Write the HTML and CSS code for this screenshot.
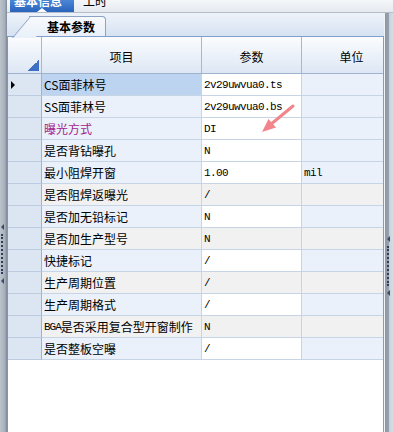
FILE: index.html
```html
<!DOCTYPE html>
<html lang="zh-CN">
<head>
    <meta charset="UTF-8">
    <title>基本参数</title>
    <link rel="stylesheet" href="styles.css">
</head>
<body>
    <div class="window">
        <div class="splitter splitter-left">
            <span class="grip-arrow"></span>
            <span class="grip-dots"></span>
            <span class="grip-arrow"></span>
        </div>

        <div class="center">
            <div class="topbar">
                <div class="top-tab active">
                    <span class="top-tab-text">基本信息</span>
                    <span class="top-tab-mark"></span>
                </div>
                <div class="top-tab">
                    <span class="top-tab-text">工时</span>
                </div>
            </div>

            <div class="workspace">
                <div class="panel">
                    <div class="tabstrip">
                        <div class="tab"><span>基本参数</span></div>
                    </div>

                    <div class="grid-view">
                        <div class="grid-row header">
                            <div class="cell corner"></div>
                            <div class="cell">项目</div>
                            <div class="cell">参数</div>
                            <div class="cell">单位</div>
                        </div>

                        <div class="grid-row odd selected">
                            <div class="cell row-head"><span class="row-pointer"></span></div>
                            <div class="cell item">CS面菲林号</div>
                            <div class="cell value">2v29uwvua0.ts</div>
                            <div class="cell unit"></div>
                        </div>
                        <div class="grid-row odd">
                            <div class="cell row-head"></div>
                            <div class="cell item">SS面菲林号</div>
                            <div class="cell value">2v29uwvua0.bs</div>
                            <div class="cell unit"></div>
                        </div>
                        <div class="grid-row odd">
                            <div class="cell row-head"></div>
                            <div class="cell item highlight">曝光方式</div>
                            <div class="cell value">DI</div>
                            <div class="cell unit"></div>
                        </div>
                        <div class="grid-row odd">
                            <div class="cell row-head"></div>
                            <div class="cell item">是否背钻曝孔</div>
                            <div class="cell value">N</div>
                            <div class="cell unit"></div>
                        </div>
                        <div class="grid-row odd">
                            <div class="cell row-head"></div>
                            <div class="cell item">最小阻焊开窗</div>
                            <div class="cell value">1.00</div>
                            <div class="cell unit">mil</div>
                        </div>
                        <div class="grid-row even">
                            <div class="cell row-head"></div>
                            <div class="cell item">是否阻焊返曝光</div>
                            <div class="cell value">/</div>
                            <div class="cell unit"></div>
                        </div>
                        <div class="grid-row odd">
                            <div class="cell row-head"></div>
                            <div class="cell item">是否加无铅标记</div>
                            <div class="cell value">N</div>
                            <div class="cell unit"></div>
                        </div>
                        <div class="grid-row even">
                            <div class="cell row-head"></div>
                            <div class="cell item">是否加生产型号</div>
                            <div class="cell value">N</div>
                            <div class="cell unit"></div>
                        </div>
                        <div class="grid-row odd">
                            <div class="cell row-head"></div>
                            <div class="cell item">快捷标记</div>
                            <div class="cell value">/</div>
                            <div class="cell unit"></div>
                        </div>
                        <div class="grid-row even">
                            <div class="cell row-head"></div>
                            <div class="cell item">生产周期位置</div>
                            <div class="cell value">/</div>
                            <div class="cell unit"></div>
                        </div>
                        <div class="grid-row odd">
                            <div class="cell row-head"></div>
                            <div class="cell item">生产周期格式</div>
                            <div class="cell value">/</div>
                            <div class="cell unit"></div>
                        </div>
                        <div class="grid-row even">
                            <div class="cell row-head"></div>
                            <div class="cell item"><span class="latin">BGA</span>是否采用复合型开窗制作</div>
                            <div class="cell value">N</div>
                            <div class="cell unit"></div>
                        </div>
                        <div class="grid-row odd">
                            <div class="cell row-head"></div>
                            <div class="cell item">是否整板空曝</div>
                            <div class="cell value">/</div>
                            <div class="cell unit"></div>
                        </div>
                    </div>
                </div>

                <div class="splitter splitter-right">
                    <span class="grip-arrow"></span>
                    <span class="grip-dots"></span>
                    <span class="grip-arrow"></span>
                </div>
            </div>
        </div>

        <!-- red annotation arrow drawn over the grid -->
        <svg class="pointer" width="393" height="432" viewBox="0 0 393 432">
            <line x1="293" y1="106" x2="270" y2="125" stroke="#f2858c" stroke-width="3" stroke-linecap="round"/>
            <polygon points="262,132 268.5,119 276,127.5" fill="#f2858c"/>
        </svg>
    </div>
</body>
</html>
```

FILE: styles.css
```css
* {
    box-sizing: border-box;
}

body {
    margin: 0;
    font-family: "Noto Sans CJK SC", "Liberation Sans", sans-serif;
    font-size: 12px;
    color: #000;
    background: #fff;
}

.window {
    position: relative;
    width: 393px;
    height: 432px;
    display: flex;
    overflow: hidden;
}

.splitter {
    display: flex;
    flex-direction: column;
    align-items: flex-start;
}

.splitter-left {
    width: 7px;
    padding: 224px 0 0 1px;
    background: linear-gradient(to right, #bcc3cc, #a6afba 70%, #7d8898);
}

.splitter-right {
    width: 9px;
    padding: 223px 0 0 2px;
    border-left: 1px solid #eef1f5;
    background: linear-gradient(to right, #8d97a5 0, #98a2af 4px, #c9d0d8 4px, #d8dde3);
}

.grip-arrow {
    width: 0;
    height: 0;
    border-top: 3px solid transparent;
    border-bottom: 3px solid transparent;
    border-right: 3px solid #3c4a66;
}

.grip-dots {
    width: 2px;
    height: 40px;
    margin: 4px 0;
    border-left: 2px dotted #2f3d5c;
}

.center {
    flex: 1;
    display: flex;
    flex-direction: column;
}

.topbar {
    height: 13px;
    display: flex;
    align-items: stretch;
    gap: 9px;
    padding-left: 3px;
    background: linear-gradient(#f4f6f9, #e6eaef);
    border-bottom: 1px solid #b3bdca;
    overflow: hidden;
}

.top-tab {
    display: flex;
    flex-direction: column;
    align-items: center;
    height: 12px;
}

.top-tab.active {
    width: 64px;
    background: linear-gradient(#4b86d6, #2a63bb);
}

.top-tab-text {
    line-height: 12px;
    margin-top: -5px;
    font-size: 12px;
}

.top-tab.active .top-tab-text {
    color: #fff;
    font-weight: bold;
    margin-right: 8px;
}

.top-tab-mark {
    margin-top: auto;
    width: 0;
    height: 0;
    border-left: 5px solid transparent;
    border-right: 5px solid transparent;
    border-bottom: 4px solid #fff;
}

.workspace {
    flex: 1;
    display: flex;
}

.panel {
    width: 377px;
    display: flex;
    flex-direction: column;
}

.tabstrip {
    height: 24px;
    display: flex;
    align-items: flex-end;
    padding-left: 22px;
    background: linear-gradient(#eef3fa, #d6e2f2);
    border-bottom: 1px solid #7f9fcf;
}

.tab {
    position: relative;
    width: 77px;
    height: 20px;
    display: flex;
    align-items: center;
    justify-content: center;
    padding-left: 8px;
    font-weight: bold;
    background: linear-gradient(#f7f9fd, #e9f0f9);
    border-top: 1px solid #8ca3c6;
    border-right: 1px solid #8ca3c6;
    border-radius: 0 4px 0 0;
}

.tab::before {
    content: "";
    position: absolute;
    left: -17px;
    top: -1px;
    width: 22px;
    height: 21px;
    background: linear-gradient(#f7f9fd, #e9f0f9);
    border-left: 1px solid #8ca3c6;
    border-top: 1px solid #8ca3c6;
    transform: skewX(-40deg);
    transform-origin: bottom left;
}

.tab span {
    position: relative;
}

.grid-view {
    flex: 1;
    background: #fff;
    border-left: 1px solid #8396b0;
    border-right: 1px solid #8a9bb2;
    overflow: hidden;
}

.grid-row {
    display: grid;
    grid-template-columns: 34px 160px 100px 100px;
    width: 394px;
    height: 22px;
}

.cell {
    display: flex;
    align-items: center;
    padding-left: 2px;
    white-space: nowrap;
    overflow: hidden;
    border-right: 1px solid #c6d4e6;
    border-bottom: 1px solid #c6d4e6;
}

.grid-row.header {
    height: 37px;
}

.header .cell {
    justify-content: center;
    padding-left: 0;
    padding-top: 3px;
    background: linear-gradient(#fbfcfe, #dde7f4);
    border-right-color: #a4b8d2;
    border-bottom-color: #9fb3cf;
}

.header .corner {
    background:
        linear-gradient(135deg, transparent 50%, #3d6fc6 50%) right 2px bottom 2px / 11px 11px no-repeat,
        linear-gradient(#fbfcfe, #dde7f4);
}

.row-head {
    background: #dce6f3;
    border-right-color: #9fb3cf;
    border-bottom-color: #bccbdf;
}

.row-pointer {
    width: 0;
    height: 0;
    margin-left: 1px;
    border-top: 4px solid transparent;
    border-bottom: 4px solid transparent;
    border-left: 4px solid #000;
}

.value {
    font-family: "Liberation Mono", "Noto Sans CJK SC", monospace;
    font-size: 11px;
    letter-spacing: -0.6px;
    background: #fff;
}

.latin {
    font-family: "Liberation Mono", monospace;
    font-size: 11px;
    letter-spacing: -1px;
}

.odd .item,
.odd .unit {
    background: #eaf1fa;
}

.even .item,
.even .unit {
    background: #f1f1f1;
}

.even .value {
    background: #f1f1f1;
}

.unit {
    font-family: "Liberation Mono", monospace;
    font-size: 11px;
    letter-spacing: -0.6px;
}

.selected .item {
    background: #bdd4f1;
}

.highlight {
    color: #a3238f;
}

.pointer {
    position: absolute;
    left: 0;
    top: 0;
    pointer-events: none;
}
```
